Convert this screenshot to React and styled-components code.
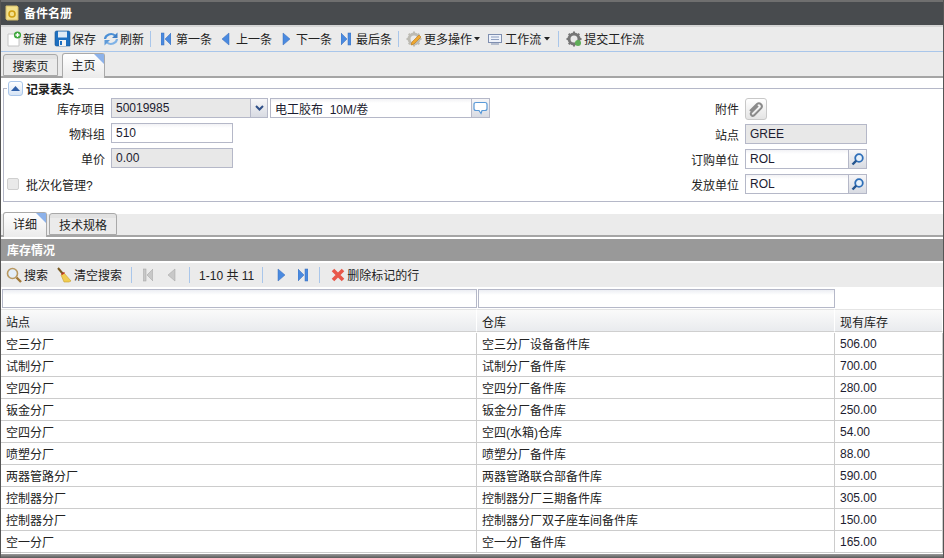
import React from 'react';
import styled, { createGlobalStyle } from 'styled-components';

const GlobalStyle = createGlobalStyle`
  * { box-sizing: border-box; }
  html, body { margin: 0; padding: 0; background: #fff; }
  body {
    font-family: "Liberation Sans", "Noto Sans CJK SC", sans-serif;
    font-size: 12px;
    color: #222;
    overflow: hidden;
  }
`;

const Page = styled.div`
  width: 944px;
  height: 558px;
  overflow: hidden;
  display: flex;
  flex-direction: column;
  border-left: 1px solid #555;
  border-right: 1px solid #555;
  background: #fff;
`;

const TitleBar = styled.div`
  height: 27px;
  display: flex;
  align-items: center;
  gap: 5px;
  padding: 0 0 2px 4px;
  background: #484b4e;
  border-top: 2px solid #6f6f6f;
  border-bottom: 2px solid #d5d5d5;
  color: #fff;
  font-weight: bold;
  font-size: 12px;
`;

const Toolbar = styled.div`
  height: ${p => p.$height || 25}px;
  margin-top: ${p => p.$top || 0}px;
  display: flex;
  align-items: center;
  padding: 0 0 1px ${p => p.$pad || 5}px;
  background: #ebebeb;
  border-bottom: ${p => (p.$line ? '1px solid #a9c6ea' : 'none')};
  flex-shrink: 0;
`;

const ToolButton = styled.div`
  display: flex;
  align-items: center;
  gap: ${p => p.$gap ?? 1}px;
  margin-right: ${p => p.$right ?? 7}px;
  color: ${p => p.$color || '#222'};
  white-space: nowrap;
`;

const Sep = styled.div`
  width: 1px;
  height: 16px;
  background: #a9c6ea;
  margin: 0 ${p => p.$right ?? 10}px 0 0;
`;

const TabStrip = styled.div`
  height: ${p => p.$height}px;
  display: flex;
  align-items: flex-end;
  gap: ${p => p.$gap}px;
  padding-left: 2px;
  background: #ebebeb;
  border-bottom: 2px solid #a5a5a5;
  flex-shrink: 0;
`;

const Tab = styled.div`
  position: relative;
  width: ${p => p.$width}px;
  height: ${p => (p.$active ? 25 : 22)}px;
  display: flex;
  align-items: center;
  justify-content: center;
  margin-bottom: ${p => (p.$active ? -2 : 0)}px;
  padding-bottom: ${p => (p.$active ? 3 : 0)}px;
  border: 1px solid #a9a9a9;
  border-bottom: ${p => (p.$active ? 'none' : '1px solid #a9a9a9')};
  border-radius: 3px 3px 0 0;
  background: ${p => (p.$active ? 'linear-gradient(#ffffff, #ebebeb)' : 'linear-gradient(#e2e2e2 0 4px, #ebebeb 4px)')};
  color: #222;
  font-size: 12px;
  ${p => p.$active && `
    &::after {
      content: '';
      position: absolute;
      top: 0;
      right: 0;
      border-top: 10px solid #8db2ea;
      border-left: 10px solid transparent;
    }
  `}
`;

const FormArea = styled.div`
  height: 136px;
  padding: 2px 0 0 2px;
  flex-shrink: 0;
`;

const FieldSet = styled.fieldset`
  margin: 0;
  height: 122px;
  padding: 0;
  border: 1px solid #b5b8c8;
  border-right: none;
  min-width: 0;
`;

const Legend = styled.legend`
  display: flex;
  align-items: center;
  gap: 3px;
  padding: 0 4px 0 1px;
  margin-left: 3px;
  height: 16px;
  font-weight: bold;
  font-size: 12px;
`;

const CollapseBtn = styled.span`
  width: 15px;
  height: 15px;
  display: flex;
  align-items: center;
  justify-content: center;
  border: 1px solid #a9c6ea;
  border-radius: 3px;
  background: linear-gradient(#ffffff, #d6e4f5);
`;

const FormBody = styled.div`
  height: 104px;
  width: 940px;
  display: grid;
  grid-template-columns: 634px 1fr;
`;

const Column = styled.div`
  display: flex;
  flex-direction: column;
  gap: 5px;
  padding-top: 2px;
`;

const Row = styled.div`
  display: flex;
  align-items: center;
  height: ${p => p.$height || 20}px;
`;

const Label = styled.label`
  width: 107px;
  padding-right: 6px;
  text-align: right;
  white-space: nowrap;
  flex-shrink: 0;
`;

const Input = styled.div`
  width: ${p => p.$width}px;
  height: 20px;
  margin-left: ${p => p.$left || 0}px;
  display: flex;
  align-items: center;
  padding-left: 4px;
  border: 1px solid #b5b8c8;
  background: ${p => (p.$readonly ? '#e8e8e8' : 'linear-gradient(#f2f2f5, #fff 4px)')};
  color: #1c1c30;
  white-space: pre;
  flex-shrink: 0;
`;

const Trigger = styled.div`
  width: ${p => p.$width || 18}px;
  height: 20px;
  display: flex;
  align-items: center;
  justify-content: center;
  border: 1px solid #b5b8c8;
  border-left: none;
  background: linear-gradient(#f6f6f8, #d8dbe2);
  flex-shrink: 0;
`;

const AttachBtn = styled.div`
  width: 22px;
  height: 22px;
  display: flex;
  align-items: center;
  justify-content: center;
  border: 1px solid #c8c8c8;
  border-radius: 3px;
  background: linear-gradient(#fff, #e4e4e4);
`;

const CheckRow = styled.div`
  display: flex;
  align-items: center;
  gap: 7px;
  height: 20px;
  margin-top: 1px;
  padding-left: 3px;
`;

const CheckBox = styled.span`
  width: 12px;
  height: 12px;
  border: 1px solid #cfcfcf;
  border-radius: 2px;
  background: #e9e9e9;
`;

const SectionHead = styled.div`
  height: 22px;
  margin-top: 2px;
  display: flex;
  align-items: center;
  padding: 0 0 1px 6px;
  background: #999;
  color: #fff;
  font-weight: bold;
  flex-shrink: 0;
`;

const Grid = styled.div`
  display: grid;
  grid-template-columns: 476px 358px 108px;
  flex-shrink: 0;
`;

const FilterCell = styled.div`
  height: 22px;
  padding: 2px 0 1px ${p => p.$pad || 0}px;
`;

const FilterInput = styled.div`
  height: 19px;
  border: 1px solid #b5b8c8;
  background: linear-gradient(#eceef3, #fff 5px);
`;

const HeadCell = styled.div`
  height: 23px;
  margin-bottom: 1px;
  display: flex;
  align-items: center;
  padding: 1px 0 0 5px;
  background: linear-gradient(#fafafa, #e9ebee);
  border-top: 1px solid #e4e4e4;
  border-right: 1px solid #fff;
  border-bottom: 1px solid #cfcfcf;
`;

const Cell = styled.div`
  height: 22px;
  display: flex;
  align-items: center;
  padding-left: 5px;
  border-right: 1px solid #ccc;
  border-bottom: 1px solid #ccc;
  color: ${p => p.$color || '#222'};
`;

const BottomBar = styled.div`
  flex: 1;
  margin-top: 1px;
  background: linear-gradient(#999, #5a5a5a);
`;

const NoteIcon = () => (
  <svg width="14" height="16" viewBox="0 0 14 16">
    <path d="M1 1l11 0 1 1v13H2l-1-1z" fill="#f3e08c" stroke="#d2bb6a" />
    <circle cx="7" cy="9" r="3" fill="none" stroke="#cf9f14" strokeWidth="1.6" />
  </svg>
);

const NewIcon = () => (
  <svg width="16" height="16" viewBox="0 0 16 16">
    <path d="M2 3h8l3 3v9H2z" fill="#fff" stroke="#c4c4c4" />
    <circle cx="11.5" cy="4" r="3.6" fill="#3fa83c" />
    <path d="M11.5 2v4M9.5 4h4" stroke="#fff" strokeWidth="1.4" />
  </svg>
);

const SaveIcon = () => (
  <svg width="17" height="17" viewBox="0 0 17 17">
    <path d="M1 2.5Q1 1 2.5 1h12Q16 1 16 2.5V16H2.5Q1 16 1 14.5z" fill="#1d6fc0" stroke="#14508f" strokeWidth=".6" />
    <rect x="4" y="1.5" width="9" height="6" fill="#dfeaf5" />
    <rect x="5" y="10" width="7" height="6" fill="#f2f2f2" />
    <rect x="6" y="11" width="2" height="4" fill="#1d6fc0" />
  </svg>
);

const RefreshIcon = () => (
  <svg width="16" height="16" viewBox="0 0 16 16">
    <path d="M2 8a6 5.5 0 0 1 10-3.5" fill="none" stroke="#4a8fd6" strokeWidth="2.2" />
    <path d="M14.5 1.5v5.5H9z" fill="#3f7fc6" />
    <path d="M14 8a6 5.5 0 0 1-10 3.5" fill="none" stroke="#7fb2e6" strokeWidth="2.2" />
    <path d="M1.5 14.5V9H7z" fill="#5f9ad8" />
  </svg>
);

const Arrow = ({ dir, bar, grey }) => {
  const fill = grey ? '#c8c8c8' : '#4a8ae0';
  const edge = grey ? '#a0a0a0' : '#3a6cb8';
  return (
    <svg width="10" height="14" viewBox="0 0 10 14">
      {dir === 'left' ? (
        <>
          {bar && <rect x="0" y="1" width="3" height="12" fill={fill} stroke={edge} strokeWidth=".5" />}
          <path d={bar ? 'M10 1v12L4 7z' : 'M8 1v12L1 7z'} fill={fill} stroke={edge} strokeWidth=".5" />
        </>
      ) : (
        <>
          {bar && <rect x="7" y="1" width="3" height="12" fill={fill} stroke={edge} strokeWidth=".5" />}
          <path d={bar ? 'M0 1v12l6-6z' : 'M2 1v12l7-6z'} fill={fill} stroke={edge} strokeWidth=".5" />
        </>
      )}
    </svg>
  );
};

const GearIcon = ({ pencil }) => (
  <svg width="16" height="16" viewBox="0 0 16 16">
    <circle cx="8" cy="8" r="5" fill="none" stroke={pencil ? '#bdbbb3' : '#777'} strokeWidth="3" />
    <path
      d="M8 .5v3M8 12.5v3M.5 8h3M12.5 8h3M2.7 2.7l2 2M11.3 11.3l2 2M13.3 2.7l-2 2M4.7 11.3l-2 2"
      stroke={pencil ? '#bdbbb3' : '#777'}
      strokeWidth="2"
    />
    {pencil ? (
      <path d="M5 14l1-3 7-7 2 2-7 7z" fill="#f0a830" stroke="#b87818" strokeWidth=".6" />
    ) : (
      <path d="M9 12a3 3 0 0 1 6 0 3 3 0 0 1-6 0z" fill="#5fae58" />
    )}
  </svg>
);

const FlowIcon = () => (
  <svg width="14" height="12" viewBox="0 0 14 12">
    <rect x=".5" y="1.5" width="13" height="8" fill="#eef2fa" stroke="#7f8fb0" />
    <path d="M3 4h8M3 6.5h8" stroke="#8f9fc0" />
    <path d="M3 11h8" stroke="#7f8fb0" />
  </svg>
);

const Caret = () => (
  <svg width="6" height="4" viewBox="0 0 6 4">
    <path d="M0 0h6L3 3.5z" fill="#222" />
  </svg>
);

const SearchBig = () => (
  <svg width="16" height="16" viewBox="0 0 16 16">
    <circle cx="6.5" cy="6.5" r="5" fill="#e4eef8" stroke="#b89860" strokeWidth="1.6" />
    <path d="M10.5 10.5l4.5 4.5" stroke="#a07838" strokeWidth="2.4" />
  </svg>
);

const Broom = () => (
  <svg width="16" height="16" viewBox="0 0 16 16">
    <path d="M1 1l5 6" stroke="#7a5a20" strokeWidth="2" />
    <path d="M4 8l3-2 7 8-2 1H7z" fill="#f0cc50" stroke="#c8a030" strokeWidth=".6" />
    <path d="M4 7l3-2 1 1-3 2z" fill="#c03020" />
  </svg>
);

const RedX = () => (
  <svg width="14" height="14" viewBox="0 0 14 14">
    <path d="M2 2l10 10M12 2L2 12" stroke="#e8584a" strokeWidth="3.6" />
  </svg>
);

const ClipIcon = () => (
  <svg width="18" height="18" viewBox="0 0 18 18">
    <path
      d="M3 11l7-7a3 3 0 0 1 4.200 4.200L7 15.400a2 2 0 0 1-2.800-2.800L11 5.800"
      fill="none"
      stroke="#8a8a8a"
      strokeWidth="2"
    />
  </svg>
);

const Bubble = () => (
  <svg width="15" height="14" viewBox="0 0 15 14">
    <path d="M3 1.500h9q2 0 2 2v4q0 2-2 2H9l-1 3-2-3H3q-2 0-2-2v-4q0-2 2-2z" fill="#fff" stroke="#5a9ad8" strokeWidth="1.200" />
  </svg>
);

const Chevron = () => (
  <svg width="9" height="6" viewBox="0 0 9 6">
    <path d="M1 1l3.500 3.500L8 1" fill="none" stroke="#2f4f88" strokeWidth="2" />
  </svg>
);

const UpTri = () => (
  <svg width="9" height="5" viewBox="0 0 9 5">
    <path d="M0 5L4.500 0 9 5z" fill="#2f5fa8" />
  </svg>
);

const Lens = () => (
  <svg width="15" height="15" viewBox="0 0 15 15">
    <circle cx="9" cy="6" r="3.800" fill="#e8f2fb" stroke="#2f6fb8" strokeWidth="1.800" />
    <path d="M6.300 8.700L2.500 12.500" stroke="#24558f" strokeWidth="2.400" />
  </svg>
);

const rows = [
  ['空三分厂', '空三分厂设备备件库', '506.00'],
  ['试制分厂', '试制分厂备件库', '700.00'],
  ['空四分厂', '空四分厂备件库', '280.00'],
  ['钣金分厂', '钣金分厂备件库', '250.00'],
  ['空四分厂', '空四(水箱)仓库', '54.00'],
  ['喷塑分厂', '喷塑分厂备件库', '88.00'],
  ['两器管路分厂', '两器管路联合部备件库', '590.00'],
  ['控制器分厂', '控制器分厂三期备件库', '305.00'],
  ['控制器分厂', '控制器分厂双子座车间备件库', '150.00'],
  ['空一分厂', '空一分厂备件库', '165.00'],
];

export default function App() {
  return (
    <Page>
      <GlobalStyle />
      <TitleBar>
        <NoteIcon />
        备件名册
      </TitleBar>

      <Toolbar $line>
        <ToolButton><NewIcon />新建</ToolButton>
        <ToolButton><SaveIcon />保存</ToolButton>
        <ToolButton $right={6}><RefreshIcon />刷新</ToolButton>
        <Sep />
        <ToolButton $gap={5} $right={9}><Arrow dir="left" bar />第一条</ToolButton>
        <ToolButton $gap={5} $right={9}><Arrow dir="left" />上一条</ToolButton>
        <ToolButton $gap={5} $right={9}><Arrow dir="right" />下一条</ToolButton>
        <ToolButton $gap={5} $right={6}><Arrow dir="right" bar />最后条</ToolButton>
        <Sep $right={7} />
        <ToolButton $gap={2} $right={8}><GearIcon pencil />更多操作<Caret /></ToolButton>
        <ToolButton $gap={3} $right={8}><FlowIcon />工作流<Caret /></ToolButton>
        <Sep $right={7} />
        <ToolButton $gap={2}><GearIcon />提交工作流</ToolButton>
      </Toolbar>

      <TabStrip $height={26} $gap={4}>
        <Tab $width={55}>搜索页</Tab>
        <Tab $width={43} $active>主页</Tab>
      </TabStrip>

      <FormArea>
        <FieldSet>
          <Legend><CollapseBtn><UpTri /></CollapseBtn>记录表头</Legend>
          <FormBody>
            <Column>
              <Row>
                <Label>库存项目</Label>
                <Input $width={140} $readonly>50019985</Input>
                <Trigger $width={17}><Chevron /></Trigger>
                <Input $width={202} $left={2}>电工胶布  10M/卷</Input>
                <Trigger><Bubble /></Trigger>
              </Row>
              <Row>
                <Label>物料组</Label>
                <Input $width={122}>510</Input>
              </Row>
              <Row>
                <Label>单价</Label>
                <Input $width={122} $readonly>0.00</Input>
              </Row>
              <CheckRow><CheckBox />批次化管理?</CheckRow>
            </Column>
            <Column>
              <Row $height={21}>
                <Label>附件</Label>
                <AttachBtn><ClipIcon /></AttachBtn>
              </Row>
              <Row>
                <Label>站点</Label>
                <Input $width={122} $readonly>GREE</Input>
              </Row>
              <Row>
                <Label>订购单位</Label>
                <Input $width={104}>ROL</Input>
                <Trigger><Lens /></Trigger>
              </Row>
              <Row>
                <Label>发放单位</Label>
                <Input $width={104}>ROL</Input>
                <Trigger><Lens /></Trigger>
              </Row>
            </Column>
          </FormBody>
        </FieldSet>
      </FormArea>

      <TabStrip $height={23} $gap={2}>
        <Tab $width={44} $active>详细</Tab>
        <Tab $width={68}>技术规格</Tab>
      </TabStrip>

      <SectionHead>库存情况</SectionHead>

      <Toolbar $height={24} $top={2}>
        <ToolButton $gap={2} $right={9}><SearchBig />搜索</ToolButton>
        <ToolButton $gap={1} $right={9}><Broom />清空搜索</ToolButton>
        <Sep $right={11} />
        <ToolButton $right={14}><Arrow dir="left" bar grey /></ToolButton>
        <ToolButton $right={12}><Arrow dir="left" grey /></ToolButton>
        <Sep $right={9} />
        <ToolButton $right={8}>1-10 共 11</ToolButton>
        <Sep $right={13} />
        <ToolButton $right={12}><Arrow dir="right" /></ToolButton>
        <ToolButton $right={11}><Arrow dir="right" bar /></ToolButton>
        <Sep $right={11} />
        <ToolButton $gap={2}><RedX />删除标记的行</ToolButton>
      </Toolbar>

      <Grid>
        <FilterCell $pad={1}><FilterInput /></FilterCell>
        <FilterCell $pad={1}><FilterInput /></FilterCell>
        <FilterCell />
        <HeadCell>站点</HeadCell>
        <HeadCell>仓库</HeadCell>
        <HeadCell>现有库存</HeadCell>
        {rows.map((r, i) => (
          <React.Fragment key={i}>
            <Cell>{r[0]}</Cell>
            <Cell>{r[1]}</Cell>
            <Cell $color="#1c1c30">{r[2]}</Cell>
          </React.Fragment>
        ))}
      </Grid>

      <BottomBar />
    </Page>
  );
}
